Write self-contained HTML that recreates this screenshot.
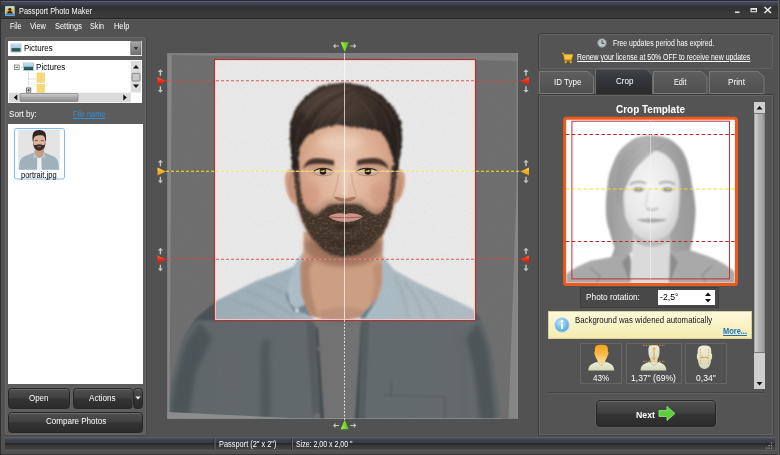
<!DOCTYPE html>
<html><head><meta charset="utf-8"><title>Passport Photo Maker</title>
<style>
html,body{margin:0;padding:0;}
body{width:780px;height:455px;overflow:hidden;background:#525252;font-family:"Liberation Sans","DejaVu Sans",sans-serif;font-size:9px;color:#fff;position:relative;}
.a{position:absolute;box-sizing:border-box;}
.t{position:absolute;white-space:nowrap;line-height:1;transform-origin:0 50%;}
#titlebar{left:0;top:0;width:780px;height:20.4px;background:linear-gradient(#2c2c30 0,#2c2c30 0.7px,#5a5c68 1px,#5a5c68 1.5px,#45475b 2px,#3d3f4e 5.3px,#313131 5.8px,#333 10px,#3a3a3a 13px,#3a3a3a 17.6px,#242424 18.2px,#242424 19.2px,#5a5a5a 19.5px,#5a5a5a 20.4px);}
#menubar{left:0;top:20px;width:780px;height:14px;background:#525252;}
#frameL{left:0;top:0;width:1.3px;height:455px;background:#303030;}
#frameR{left:777.8px;top:0;width:2.2px;height:455px;background:#3e3e3e;border-left:0.6px solid #5c5c5c;}
#leftpanel{left:5px;top:37px;width:141px;height:398px;background:#5c5c5c;border:1px solid #686868;border-radius:2px;box-shadow:1px 0 0 #454545,0 1px 0 #454545;}
#combo{left:8px;top:41px;width:134px;height:14.5px;background:#fff;}
#tree{left:8px;top:60px;width:134px;height:43.2px;background:#fff;}
#filelist{left:8px;top:124.300px;width:134.800px;height:260px;background:#fff;}
.btn{background:linear-gradient(#505050,#404040 45%,#333 55%,#2c2c2c);border:1px solid #262626;border-radius:3.5px;box-shadow:inset 0 1px 0 #6a6a6a,0 0 0 0.5px #666;text-align:center;color:#fff;}
#status{left:5px;top:437px;width:770px;height:13.5px;background:linear-gradient(#5c5c5c 0,#5c5c5c 0.8px,#4a4d5c 1.4px,#3d3f4c 3.5px,#3a3c47 5.6px,#262628 6.2px,#2a2a2a 7px,#3a3a3a 9px,#444 12.4px,#5a5a5a 12.8px);}
#bottom{left:0;top:453.5px;width:780px;height:1.5px;background:#383838;}
#rightpanel{left:539px;top:95px;width:234px;height:340px;background:#545454;border:1px solid #646464;box-shadow:-1px 0 0 #3c3c3c,0 -1px 0 #3c3c3c,1px 0 0 #444,0 1px 0 #444;}
#infobox{left:539px;top:34px;width:234px;height:35px;background:#545454;border:1px solid #626262;border-radius:2px;box-shadow:-1px 0 0 #3e3e3e,0 -1px 0 #3e3e3e;}
</style></head><body>
<div class="a" id="titlebar"></div>
<div class="a" id="menubar"></div>

<svg class="a" style="left:4px;top:5px;" width="12" height="12" viewBox="0 0 12 12"><defs><linearGradient id="ai" x1="0" y1="0" x2="0" y2="1"><stop offset="0" stop-color="#f8e070"/><stop offset="0.7" stop-color="#f0a020"/><stop offset="1" stop-color="#e08818"/></linearGradient></defs>
<rect x="1" y="1" width="9.700" height="9.900" rx="1" fill="#9fd2f0"/><rect x="2.300" y="2.200" width="7.100" height="6.400" fill="url(#ai)"/><rect x="1.500" y="8.800" width="8.700" height="1.700" fill="#2f7fd0"/>
<circle cx="5.850" cy="4.300" r="1.500" fill="#3a2410"/><path d="M3.300,8.600 C3.300,6.300 4.500,5.900 5.850,5.900 C7.200,5.900 8.400,6.300 8.400,8.600 Z" fill="#3a2410"/></svg>
<svg class="a" style="left:730px;top:4px;" width="46" height="12" viewBox="730 4 46 12"><path d="M735,11.500 H739.500 V13 H735 Z" fill="#e8e8e8"/><path d="M750.500,8 H757 V12.300 H750.500 Z M751.600,9.800 H755.900 V11.300 H751.600 Z" fill="#e8e8e8" fill-rule="evenodd"/><path d="M764.500,7 L771,13 M771,7 L764.500,13" stroke="#f0f0f0" stroke-width="1.500"/></svg>
<div class="a" id="leftpanel"></div>
<div class="a" id="combo"></div>
<div class="a" id="tree"></div>
<svg class="a" style="left:5px;top:38px;" width="141" height="68" viewBox="5 38 141 68">
<defs><linearGradient id="pic" x1="0" y1="0" x2="0" y2="1"><stop offset="0" stop-color="#cfe6f6"/><stop offset="0.45" stop-color="#9fc8e4"/><stop offset="0.55" stop-color="#2e6a5c"/><stop offset="1" stop-color="#1f4a4a"/></linearGradient>
<linearGradient id="cbb" x1="0" y1="0" x2="0" y2="1"><stop offset="0" stop-color="#a8a8a8"/><stop offset="1" stop-color="#6e6e6e"/></linearGradient>
<linearGradient id="sth" x1="0" y1="0" x2="0" y2="1"><stop offset="0" stop-color="#d0d0d0"/><stop offset="0.5" stop-color="#a8a8a8"/><stop offset="1" stop-color="#8c8c8c"/></linearGradient></defs>
<!-- combo icon -->
<rect x="11" y="44" width="10" height="8" fill="url(#pic)" stroke="#b8c8d4" stroke-width="1"/>
<rect x="130.800" y="41.700" width="10.200" height="13.100" fill="url(#cbb)" stroke="#5a5a5a" stroke-width="0.600"/>
<path d="M133.700,47 H138.300 L136,50 Z" fill="#333"/>
<!-- tree -->
<rect x="14.500" y="65" width="4.600" height="4.600" fill="#fff" stroke="#777" stroke-width="0.800"/>
<path d="M15.500,67.300 H18.100" stroke="#222" stroke-width="0.800"/>
<path d="M19.200,67.300 H23" stroke="#999" stroke-width="0.700" stroke-dasharray="0.800 0.800"/>
<rect x="23.500" y="63" width="10" height="7.500" fill="url(#pic)" stroke="#b8c8d4" stroke-width="1"/>
<path d="M28.500,71.500 V92 M28.500,79 H36" stroke="#aaa" stroke-width="0.700" stroke-dasharray="0.800 0.800" fill="none"/>
<rect x="37" y="73" width="7.600" height="9.500" fill="#f8d978" stroke="#eec860" stroke-width="0.500"/>
<rect x="37" y="84.400" width="7.600" height="8" fill="#f8d978" stroke="#eec860" stroke-width="0.500"/>
<rect x="26.500" y="88" width="4.300" height="4.300" fill="#fff" stroke="#555" stroke-width="0.800"/>
<path d="M27.300,90.200 H30 M28.650,88.800 V91.600" stroke="#222" stroke-width="0.800"/>
<!-- v scrollbar -->
<rect x="130.800" y="61" width="10.200" height="31.500" fill="#dcdcdc"/>
<path d="M133,68.500 L136,65 L139,68.500 Z M133,84.500 L136,88 L139,84.500 Z" fill="#111"/>
<rect x="132" y="73.400" width="8" height="7.600" rx="1" fill="#c8c8c8" stroke="#777" stroke-width="0.800"/>
<!-- h scrollbar -->
<rect x="9" y="92.700" width="121.800" height="9.600" fill="#dadada"/>
<rect x="20" y="93.500" width="58" height="8" rx="1" fill="url(#sth)" stroke="#808080" stroke-width="0.700"/>
<path d="M17.300,94.500 L13.800,97.500 L17.300,100.500 Z M123.300,94.500 L126.800,97.500 L123.300,100.500 Z" fill="#111"/>
</svg>
<div class="a" id="filelist"></div>
<svg class="a" style="left:12px;top:126px;" width="56" height="56" viewBox="12 126 56 56">
<defs><clipPath id="thc"><rect x="18.200" y="129.900" width="41.600" height="39.800"/></clipPath>
<filter id="thb" x="-10%" y="-10%" width="120%" height="120%"><feGaussianBlur stdDeviation="0.45"/></filter></defs>
<rect x="14.500" y="128.500" width="50" height="50.500" rx="2" fill="#fbfdff" stroke="#7fbcec" stroke-width="1"/>
<rect x="18.200" y="129.900" width="41.600" height="39.800" fill="#e4e4e4"/>
<g clip-path="url(#thc)"><g filter="url(#thb)">
<path d="M19,170 L19.600,163 C20.500,158 23,156.500 28,155 L34,152.600 L39.300,157 L44.600,152.600 L50,155 C55,156.500 57.500,158 58.400,163 L59,170 Z" fill="#9fb1bb"/>
<path d="M37.300,157 L39.300,158 L41.400,157 L41.700,170 L37,170 Z" fill="#f0f0f0"/>
<path d="M34.800,148 L34.500,153 L37.300,157 L39.300,158.200 L41.400,157 L44.200,153 L44,148 Z" fill="#c89c84"/>
<path d="M34.300,152.800 L33,157.500 L36.500,158 L37.300,157 Z M44.400,152.800 L45.800,157.500 L42.300,158 L41.400,157 Z" fill="#b7c7d0"/>
<path d="M33,140 C33,133 45.600,133 45.600,140 L45.400,144 C45,148 43,150.600 39.300,150.800 C35.600,150.600 33.600,148 33.200,144 Z" fill="#dcb39c"/>
<path d="M33,141.500 C33.300,147 34.500,150 39.300,150.800 C44.100,150 45.300,147 45.600,141.500 L44.800,144.500 C43.500,146 42,144.300 39.300,144.300 C36.600,144.300 35.100,146 33.800,144.500 Z" fill="#3a2d27"/>
<path d="M37.600,146.300 H41 V147.200 H37.600 Z" fill="#b98078"/>
<path d="M32.800,141.500 C32,136 32.500,132 36,130.600 C38.500,129.800 41,129.900 43,130.800 C46,132.300 46.600,136 45.800,141.500 L45.200,141.500 C45.300,138 44.500,136.500 43,135.600 C40,135 37,135.300 35,136.500 C33.800,137.500 33.500,139 33.500,141.500 Z" fill="#2f2621"/>
<path d="M35,140.600 H37.800 M40.800,140.600 H43.600" stroke="#3a2c25" stroke-width="0.700"/>
</g></g>
</svg>
<div class="a btn" style="left:8px;top:387.500px;width:61.500px;height:21px;"></div>
<div class="a btn" style="left:72.500px;top:387.500px;width:60px;height:21px;"></div>
<div class="a btn" style="left:133.300px;top:387.500px;width:9.500px;height:21px;"></div>
<svg class="a" style="left:134px;top:394px;" width="8" height="8" viewBox="0 0 8 8"><path d="M1.500,2.500 H6.500 L4,5.500 Z" fill="#fff"/></svg>
<div class="a btn" style="left:8px;top:411.500px;width:134.800px;height:21px;"></div>

<svg class="a" id="photo" style="left:150px;top:34px;" width="385" height="402" viewBox="150 34 385 402">
<defs>
<clipPath id="cv"><rect x="167.5" y="53" width="350.5" height="365.5"/></clipPath>
<filter id="b05" x="-10%" y="-10%" width="120%" height="120%"><feGaussianBlur stdDeviation="0.5"/></filter>
<filter id="b1" x="-10%" y="-10%" width="120%" height="120%"><feGaussianBlur stdDeviation="0.9"/></filter>
<filter id="b2" x="-20%" y="-20%" width="140%" height="140%"><feGaussianBlur stdDeviation="2"/></filter>
<filter id="b3" x="-30%" y="-30%" width="160%" height="160%"><feGaussianBlur stdDeviation="4"/></filter>
<filter id="rag" x="-10%" y="-10%" width="120%" height="120%"><feTurbulence type="fractalNoise" baseFrequency="0.35" numOctaves="2" seed="4" result="n"/><feDisplacementMap in="SourceGraphic" in2="n" scale="3" xChannelSelector="R" yChannelSelector="G" result="d"/><feGaussianBlur in="d" stdDeviation="0.8"/></filter>
<filter id="rag2" x="-10%" y="-10%" width="120%" height="120%"><feTurbulence type="fractalNoise" baseFrequency="0.5" numOctaves="2" seed="9" result="n"/><feDisplacementMap in="SourceGraphic" in2="n" scale="3" xChannelSelector="R" yChannelSelector="G" result="d"/><feGaussianBlur in="d" stdDeviation="0.9"/></filter>
<filter id="grain" x="0" y="0" width="100%" height="100%"><feTurbulence type="fractalNoise" baseFrequency="0.9" numOctaves="2" seed="3" result="n"/><feColorMatrix in="n" type="matrix" values="0 0 0 0 0  0 0 0 0 0  0 0 0 0 0  0.9 0 0 0 -0.35"/><feComposite in2="SourceGraphic" operator="in"/></filter>
<filter id="bgr" x="0" y="0" width="100%" height="100%"><feTurbulence type="fractalNoise" baseFrequency="0.4" numOctaves="2" seed="11" result="n"/><feColorMatrix in="n" type="matrix" values="0 0 0 0 0  0 0 0 0 0  0 0 0 0 0  2.2 0 0 0 -0.95" result="m"/><feComposite in="SourceGraphic" in2="m" operator="in" result="c"/><feGaussianBlur in="c" stdDeviation="0.5"/></filter>
<linearGradient id="shirtg" x1="0" y1="0" x2="1" y2="0">
<stop offset="0" stop-color="#98a9b2"/><stop offset="0.35" stop-color="#a3b3bb"/><stop offset="0.65" stop-color="#acbac1"/><stop offset="1" stop-color="#b1bdc3"/></linearGradient>
<radialGradient id="faceg" cx="0.5" cy="0.38" r="0.62">
<stop offset="0" stop-color="#eccab3"/><stop offset="0.55" stop-color="#ddae93"/><stop offset="1" stop-color="#c08b70"/></radialGradient>
<radialGradient id="hairg" cx="0.45" cy="0.25" r="0.6">
<stop offset="0" stop-color="#51443b"/><stop offset="0.6" stop-color="#352b26"/><stop offset="1" stop-color="#27201c"/></radialGradient>
</defs>
<g clip-path="url(#cv)">
<rect x="167" y="52" width="352" height="367" fill="#e9e9e9"/>
<!-- shirt -->
<g filter="url(#b1)">
<path id="shp" d="M303,252 L293,267 L255,281.500 L217,300.600 L196,318 L181,342 L172,380 L167,420 L501,420 L499,400 L492,349 L483,323 L473,309 L452,298.800 L417.700,283 L393.500,269.400 L382,255 L372,300 L345,325 L318,300 Z" fill="url(#shirtg)"/>
<!-- lighten lower part (appears lighter under dim) -->
<path d="M196,320.500 L181,342 L172,380 L167,420 L501,420 L499,400 L492,349 L483,323 L481,320.500 Z" fill="#e8f8fc" opacity="0.6"/>
<!-- sleeve/fold shading -->
<path d="M200,322 L185,345 L175,382 L170,420 L188,420 L196,372 L212,338 Z" fill="#7e919c" opacity="0.55" filter="url(#b2)"/>
<path d="M478,322 L488,349 L496,420 L480,420 L474,372 L466,338 Z" fill="#7c8f9a" opacity="0.55" filter="url(#b2)"/>
<path d="M214,330 C226,360 224,390 228,420 L236,420 C233,390 236,360 222,328 Z" fill="#d0dbe0" opacity="0.45" filter="url(#b2)"/>
<path d="M262,340 C258,370 262,395 260,420 L270,420 C272,395 268,370 270,340 Z" fill="#7f929d" opacity="0.45" filter="url(#b2)"/>
<path d="M455,330 C462,360 458,390 460,420 L468,420 C468,390 470,360 462,330 Z" fill="#c4d0d6" opacity="0.4" filter="url(#b2)"/>
<g stroke="#8799a3" stroke-width="1.400" fill="none" opacity="0.55" filter="url(#b1)">
<path d="M246,290 C262,296 280,306 296,318"/><path d="M232,300 C250,304 266,312 280,322"/><path d="M262,284 C276,288 290,296 300,306"/>
<path d="M404,282 C414,292 420,304 424,320"/><path d="M420,290 C430,300 436,310 440,322"/><path d="M394,276 C402,288 406,300 408,318"/>
</g>
<!-- tshirt -->
<path d="M311,314 L322,319.500 L345,321 L362,315 L360,330 L355,420 L317,420 L318,330 Z" fill="#f0f0f0"/>
<!-- neck -->
<path d="M303.600,232 L303.600,252.700 L299.800,268 L300.800,293 L304.600,304.600 L311,316 L322,319.500 L345,320.500 L359.400,318 L366,310 L377.700,298.800 L382.500,283.500 L382.500,256.500 L383,232 Z" fill="#cda084"/>
<path d="M300,262 L300.800,293 L304.600,304.600 L311,316 L318,318 L311,292 L309,270 L316,256 Z" fill="#a67a63" opacity="0.6" filter="url(#b1)"/>
<path d="M382.500,262 L382.500,283.500 L377.700,298.800 L370,306 L374,284 L373,266 Z" fill="#b08269" opacity="0.45" filter="url(#b1)"/>
<path d="M305,250 C318,272 372,272 382,250 L382,240 L305,240 Z" fill="#8a5f4b" opacity="0.6" filter="url(#b2)"/>
<path d="M318,312 C330,306 355,306 366,311 L359,318 L345,320.500 L322,319.500 Z" fill="#b68c76" opacity="0.6" filter="url(#b1)"/>
<!-- collar -->
<path d="M303.600,252.700 L296,262 L287,290 L290,303 L296,309 L304.600,304.600 L300.800,293 L299.800,268 Z" fill="#adbec8"/>
<path d="M287,290 L290,303 L296,309 L304.600,304.600 L311,316 L303,313 L294,312 L286,298 Z" fill="#64788a" opacity="0.75"/>
<path d="M382.500,256.500 L390,266 L399,296 L392,316 L386,320 L359.400,318 L366,310 L377.700,298.800 L382.500,283.500 Z" fill="#abbcc6"/>
<path d="M359.400,318 L366,310 L377.700,298.800 L373,306 L364,320 Z" fill="#6a7e8c"/>
<ellipse cx="297" cy="310.400" rx="2" ry="1.300" fill="#f6f6f6" transform="rotate(35 297 310.400)"/>
<!-- placket -->
<path d="M306,318 L318,328 L324,420 L313,420 Z" fill="#b4c5cc"/>
<path d="M318,328 L324,420 L321,420 L316,328 Z" fill="#8798a2"/>
<path d="M362,318 L369,320 L365,420 L355,420 Z" fill="#b4c5cc"/>
<path d="M361,325 L362,318 L358,420 L355,420 Z" fill="#8798a2"/>
<circle cx="320.500" cy="349" r="3" fill="#dfe8ec"/>
<circle cx="317" cy="416" r="3" fill="#dfe8ec"/>
<!-- pocket -->
<path d="M384,395 L445,397 L445,420 M391,381 L391,396" stroke="#a9bac2" stroke-width="1.200" fill="none"/>
</g>
<g filter="url(#b1)">
<!-- ears -->
<path d="M295,169.500 C288,167 284,173 285,182 C286,193 290,203 296,205 Z" fill="#d39f84"/>
<path d="M395,169.500 C402,167 406,173 405,182 C404,193 400,202 394,204 Z" fill="#d39f84"/>
<path d="M292,175 C289,178 289,190 293,198" stroke="#b07f68" stroke-width="1.500" fill="none"/>
<path d="M398,175 C401,178 401,190 397,197" stroke="#b07f68" stroke-width="1.500" fill="none"/>
<!-- face -->
<path d="M293,150 C293,105 397,105 397,150 L396,183 L393.800,201.500 L390.300,217.700 L383.400,233.800 L371.900,247.600 L358,255.700 L344,258 L335,256.900 L321,250 L309.600,236 L302.700,222 L297,203.800 L294.600,183 Z" fill="url(#faceg)"/>
<!-- eye socket shading -->
<ellipse cx="321" cy="168" rx="14" ry="6" fill="#b98a72" opacity="0.55" filter="url(#b2)"/>
<ellipse cx="369" cy="168" rx="14" ry="6" fill="#b98a72" opacity="0.55" filter="url(#b2)"/>
<!-- cheeks shading -->
<ellipse cx="311" cy="194" rx="9" ry="12" fill="#d0937c" opacity="0.5" filter="url(#b2)"/>
<ellipse cx="379" cy="194" rx="9" ry="12" fill="#d0937c" opacity="0.5" filter="url(#b2)"/>
<path d="M294,165 L296,200 L303,222 L300,190 L299,165 Z" fill="#a87a64" opacity="0.5" filter="url(#b2)"/>
<path d="M397,165 L394,200 L388,222 L391,190 L392,165 Z" fill="#a87a64" opacity="0.55" filter="url(#b2)"/>
<!-- forehead highlight -->
<ellipse cx="340" cy="142" rx="22" ry="9" fill="#f3dccb" opacity="0.6" filter="url(#b3)"/>
<!-- nose highlight -->
<path d="M343,170 L342,196 L347,196 L347,170 Z" fill="#f0d5c3" opacity="0.6" filter="url(#b1)"/>
</g>
<!-- stubble halo -->
<path d="M294,172 L295.700,190 C297,198 300,204 306,206.500 C310,208 314,209 317,208 L324,202 L330,199.500 L344,198.500 L360,199.500 L366,203 C370,207 374,209 378,208.500 C382,208 386,206 388,203 C391,199 392.500,194 393,188 L396,172 L393.800,205 L388,225 L375,246 L358,256.500 L344,259 L331,256.900 L318,249 L307,234 L300,218 L296,200 Z" fill="#5a463b" opacity="0.25" filter="url(#b2)"/>
<!-- beard -->
<g filter="url(#rag2)">
<path d="M292.500,166 L298.500,166 L300,186 C301,197 303,206 307.500,209.700 C310,212.500 313,214.500 316.500,214.500 C320,213 322,210 324.600,208 L330,204.500 L344,203.400 L360,204.500 L367,209.400 C370,212 373,214 376.500,214.500 C380,214 382,212 384.200,209.600 C387.500,206 389,198 390.300,188 L392,166 L397.500,166 L395.500,185 L393.300,201.500 L389.800,217.700 L382.900,233.300 L371.500,247 L358,255 L344,257.300 L335,256.200 L321.500,249.500 L310.100,235.500 L303.200,222 L297.500,203.800 L295.100,185 Z" fill="#43342a"/>
</g>
<path d="M292.500,166 L298.500,166 L300,186 C301,197 303,206 307.500,209.700 C310,212.500 313,214.500 316.500,214.500 C320,213 322,210 324.600,208 L330,204.500 L344,203.400 L360,204.500 L367,209.400 C370,212 373,214 376.500,214.500 C380,214 382,212 384.200,209.600 C387.500,206 389,198 390.300,188 L392,166 L397.500,166 L395.500,185 L393.300,201.500 L389.800,217.700 L382.900,233.300 L371.500,247 L358,255 L344,257.300 L335,256.200 L321.500,249.500 L310.100,235.500 L303.200,222 L297.500,203.800 L295.100,185 Z" fill="#b89078" opacity="0.3" filter="url(#bgr)"/>
<path d="M322,232 C330,246 358,246 368,232 C360,250 330,250 322,232 Z" fill="#2a1f18" opacity="0.6" filter="url(#b2)"/>
<path d="M334,226 C340,223 350,223 356,226 C352,231 338,231 334,226 Z" fill="#2a1f18" opacity="0.55" filter="url(#b1)"/>
<g filter="url(#b05)">
<!-- mouth -->
<path d="M328.500,216.500 C335,212.300 342,213 345.500,214.200 C349,213 356,212.300 363,216.500 C356,223.500 336,223.500 328.500,216.500 Z" fill="#cf938a"/>
<path d="M329.500,216.800 C338,218 353,218 362.500,216.800" stroke="#95594f" stroke-width="0.900" fill="none"/>
</g>
<!-- hair -->
<g filter="url(#rag)">
<path d="M292.500,169 L291.500,157.600 L289.800,139 L290,123 L295.400,109.500 L305.500,96 L321,85.500 L344,82.500 L367,86 L382.500,96 L394.500,109.500 L401.200,123 L402.200,139 L400,157.600 L397.500,171.500 L395,171.500 L393.800,162 L390,148.400 L386.500,139 L379,131 L366,128.500 L352,127 L340,125 L328,126 L316.500,130 L306,137 L299.500,148 L298.500,169 Z" fill="url(#hairg)"/>
</g>
<path d="M300,110 C312,92 336,86 352,88 C338,92 318,100 308,118 Z" fill="#5a4c42" opacity="0.5" filter="url(#b2)"/>
<g stroke="#6a5a4f" stroke-width="1.700" fill="none" opacity="0.32" filter="url(#b1)">
<path d="M352,88 C335,90 315,100 303,122"/><path d="M356,92 C338,96 322,106 312,128"/><path d="M350,98 C336,102 324,112 318,128"/>
<path d="M346,86 C328,88 306,98 296,116"/><path d="M358,96 C350,104 342,114 338,124"/><path d="M362,90 C376,94 390,106 396,124"/>
<path d="M366,96 C378,102 388,114 390,134"/><path d="M360,100 C368,108 374,116 376,126"/><path d="M300,126 C296,136 295,146 296,158"/><path d="M396,128 C399,138 399,150 397,160"/>
</g>
<g stroke="#1c1512" stroke-width="1.600" fill="none" opacity="0.3" filter="url(#b1)">
<path d="M348,92 C334,96 318,108 308,126"/><path d="M354,100 C346,108 336,116 330,126"/><path d="M364,94 C378,100 388,112 392,130"/><path d="M356,88 C368,88 384,96 394,112"/>
</g>
<g filter="url(#b05)">
<!-- brows -->
<path d="M303.500,167 C305.500,162.500 309,159.300 313,158.500 C320,157.500 328,158.800 334,160.500 L334,165.500 C327,164 319,163.800 313,164.300 C309,164.800 306,166 303.500,168.500 Z" fill="#46352b" filter="url(#b1)"/>
<path d="M388.500,167.500 C386.500,162.500 382,159 377,158.200 C370,157.500 362,158.800 357,160.500 L357,165.500 C363,164 371,163.800 377,164.300 C381,164.800 385,166 388.500,169 Z" fill="#46352b" filter="url(#b1)"/>
<!-- eyes -->
<path d="M313.600,172 C318,167.800 328,167.800 333,172 C328,175.500 318,175.500 313.600,172 Z" fill="#c9b0a2"/>
<circle cx="323" cy="171.400" r="3.300" fill="#2c1a10"/>
<circle cx="324" cy="170.500" r="0.700" fill="#d8c8b8"/>
<path d="M313,172 C318,167 328,167 333.500,172" stroke="#2e1e17" stroke-width="1.200" fill="none"/>
<path d="M315,174 C319,176.300 328,176.300 332,174" stroke="#a0735e" stroke-width="0.700" fill="none"/>
<path d="M356.400,172 C361,167.800 373,167.800 378,172 C373,175.500 361,175.500 356.400,172 Z" fill="#c9b0a2"/>
<circle cx="367.900" cy="171.400" r="3.300" fill="#2c1a10"/>
<circle cx="368.900" cy="170.500" r="0.700" fill="#d8c8b8"/>
<path d="M356,172 C361,167 373,167 378.600,172" stroke="#2e1e17" stroke-width="1.200" fill="none"/>
<path d="M358,174 C362,176.300 372,176.300 376.500,174" stroke="#a0735e" stroke-width="0.700" fill="none"/>
<!-- nose -->
<path d="M334,197.500 C337,201.500 342,201 345,202 C348,201 353,201.500 356,197.500 C354,195.500 350,198.500 345,198.500 C340,198.500 336,195.500 334,197.500 Z" fill="#a26a55" opacity="0.85"/>
<path d="M338.500,174 C338,184 334.500,192 333.200,197" stroke="#c08f77" stroke-width="1.800" fill="none" opacity="0.35"/>
<path d="M351.500,174 C352,184 355.500,192 356.800,197" stroke="#c08f77" stroke-width="1.800" fill="none" opacity="0.35"/>
</g>
<!-- photo grain -->
<rect x="167" y="52" width="352" height="367" fill="#000" opacity="0.07" filter="url(#grain)"/>
</g>
<!-- dim overlay -->
<path fill-rule="evenodd" fill="#000" fill-opacity="0.52" d="M167.5,53 H518 V418.500 H167.5 Z M215,60 H475 V320 H215 Z"/>
<!-- wedges -->
<path d="M167.500,53 H171.800 L169.500,418.500 H167.500 Z" fill="#868686"/>
<path d="M167.500,53 H518 V61 L167.500,55 Z" fill="#7f7f7f"/>
<path d="M518,150 V418.500 H508.500 Z" fill="#858585"/>
<rect x="516.500" y="53" width="1.500" height="365.500" fill="#8a8a8a" opacity="0.7"/>
<path d="M167.500,412 L303,418.500 H167.500 Z" fill="#8c8c8c"/>
<!-- crop rect -->
<rect x="215.500" y="60.500" width="259" height="259" fill="none" stroke="#ffd0d0" stroke-opacity="0.85" stroke-width="1"/>
<rect x="214.500" y="59.500" width="261" height="261" fill="none" stroke="#a83636" stroke-width="1.1"/>
<!-- lines -->
<g stroke-width="1.100">
<path d="M215,80.800 H475 M215,259.300 H475" stroke="#fff" stroke-opacity="0.3"/>
<path d="M166,171.300 H215 M475,171.300 H521" stroke="#7d7420" stroke-opacity="0.85"/>
<path d="M215,171.300 H475" stroke="#fff" stroke-opacity="0.4"/>
<path d="M166,80.800 H521 M166,259.300 H521" stroke="#dc4545" stroke-dasharray="3 2" stroke-opacity="0.9"/>
<path d="M166,171.300 H521" stroke="#efe650" stroke-dasharray="3 2"/>
</g>
<line x1="344.500" y1="53" x2="344.500" y2="320" stroke="#fff" stroke-width="1" opacity="0.68"/>
<line x1="344.500" y1="320" x2="344.500" y2="420" stroke="#fff" stroke-width="1" stroke-dasharray="2 1.500" opacity="0.75"/>
<defs><linearGradient id="mr" x1="0" y1="0" x2="0" y2="1"><stop offset="0" stop-color="#ff6a30"/><stop offset="0.5" stop-color="#f02a10"/><stop offset="1" stop-color="#d81808"/></linearGradient>
<linearGradient id="my" x1="0" y1="0" x2="0" y2="1"><stop offset="0" stop-color="#ffd860"/><stop offset="0.5" stop-color="#f8b020"/><stop offset="1" stop-color="#e89810"/></linearGradient>
<linearGradient id="mg" x1="0" y1="0" x2="1" y2="0"><stop offset="0" stop-color="#b8f060"/><stop offset="0.5" stop-color="#78d828"/><stop offset="1" stop-color="#58b818"/></linearGradient></defs>
<path d="M157.500,77 L166,81 L157.500,85 Z" fill="url(#mr)"/>
<path d="M529,77 L520.500,81 L529,85 Z" fill="url(#mr)"/>
<path d="M157.500,167.5 L166,171.5 L157.500,175.5 Z" fill="url(#my)"/>
<path d="M529,167.5 L520.500,171.5 L529,175.5 Z" fill="url(#my)"/>
<path d="M157.500,255.5 L166,259.5 L157.500,263.5 Z" fill="url(#mr)"/>
<path d="M529,255.5 L520.500,259.5 L529,263.5 Z" fill="url(#mr)"/>
<path d="M340.700,42.300 H348.700 L344.700,52 Z" fill="url(#mg)"/>
<path d="M340.700,429.300 H348.700 L344.700,419.800 Z" fill="url(#mg)"/>
<path d="M159.70000000000002,75.7 V72.1 H157.8 L160.4,69.3 L163.0,72.1 H161.1 V75.7 Z M159.70000000000002,86.3 V89.9 H157.8 L160.4,92.7 L163.0,89.9 H161.1 V86.3 Z M525.3,75.7 V72.1 H523.4 L526,69.3 L528.6,72.1 H526.7 V75.7 Z M525.3,86.3 V89.9 H523.4 L526,92.7 L528.6,89.9 H526.7 V86.3 Z M159.70000000000002,166.2 V162.60000000000002 H157.8 L160.4,159.8 L163.0,162.60000000000002 H161.1 V166.2 Z M159.70000000000002,176.8 V180.39999999999998 H157.8 L160.4,183.2 L163.0,180.39999999999998 H161.1 V176.8 Z M525.3,166.2 V162.60000000000002 H523.4 L526,159.8 L528.6,162.60000000000002 H526.7 V166.2 Z M525.3,176.8 V180.39999999999998 H523.4 L526,183.2 L528.6,180.39999999999998 H526.7 V176.8 Z M159.70000000000002,254.2 V250.60000000000002 H157.8 L160.4,247.8 L163.0,250.60000000000002 H161.1 V254.2 Z M159.70000000000002,264.8 V268.4 H157.8 L160.4,271.2 L163.0,268.4 H161.1 V264.8 Z M525.3,254.2 V250.60000000000002 H523.4 L526,247.8 L528.6,250.60000000000002 H526.7 V254.2 Z M525.3,264.8 V268.4 H523.4 L526,271.2 L528.6,268.4 H526.7 V264.8 Z M339,45.4 H335.5 V43.4 L333,46 L335.5,48.6 V46.6 H339 Z M350.3,45.4 H353.8 V43.4 L356.3,46 L353.8,48.6 V46.6 H350.3 Z M339,424.9 H335.5 V422.9 L333,425.5 L335.5,428.1 V426.1 H339 Z M350.3,424.9 H353.8 V422.9 L356.3,425.5 L353.8,428.1 V426.1 H350.3 Z" fill="#c4c4c4"/>
</svg>

<div class="a" id="infobox"></div>
<svg class="a" style="left:596.400px;top:37px;" width="12" height="12" viewBox="0 0 12 12"><circle cx="6" cy="6" r="4.200" fill="#bcc4c6" stroke="#8e9698" stroke-width="0.800"/><path d="M6,3.200 V6.300 H8.200" stroke="#3a3a3a" stroke-width="1" fill="none"/></svg>
<svg class="a" style="left:561px;top:52px;" width="13" height="12" viewBox="0 0 13 12"><path d="M1,1.300 H2.600 L4,7.800 H10.500" stroke="#f0a818" stroke-width="1.200" fill="none"/><path d="M3,2.600 H11.700 L10.500,7.300 H4 Z" fill="#f8c544" stroke="#f0a818" stroke-width="0.600"/><circle cx="4.800" cy="10" r="1.200" fill="#f0a010"/><circle cx="9.700" cy="10" r="1.200" fill="#f0a010"/></svg>
<!-- tabs -->
<svg class="a" style="left:535px;top:66px;" width="240" height="32" viewBox="535 66 240 32">
<defs><linearGradient id="tabi" x1="0" y1="0" x2="0" y2="1"><stop offset="0" stop-color="#5e5e5e"/><stop offset="1" stop-color="#505050"/></linearGradient>
<linearGradient id="taba" x1="0" y1="0" x2="0" y2="1"><stop offset="0" stop-color="#42434b"/><stop offset="0.45" stop-color="#34353a"/><stop offset="1" stop-color="#2a2a2a"/></linearGradient></defs>
<path d="M539.500,93.500 V71.500 H588 L593.500,77 V93.500 Z" fill="url(#tabi)" stroke="#777" stroke-width="1"/>
<path d="M653.500,93.500 V71.500 H701.500 L707,77 V93.500 Z" fill="url(#tabi)" stroke="#777" stroke-width="1"/>
<path d="M709.500,93.500 V71.500 H758.500 L764,77 V93.500 Z" fill="url(#tabi)" stroke="#777" stroke-width="1"/>
<path d="M595.500,94.500 V69 H646.500 L652.500,75 V94.500 Z" fill="url(#taba)" stroke="#6a6a6a" stroke-width="1"/>
</svg>
<div class="a" id="rightpanel"></div>
<!-- crop template -->
<svg class="a" id="tmpl" style="left:560px;top:113px;" width="182" height="174" viewBox="560 113 182 174">
<defs>
<clipPath id="tc"><rect x="566.200" y="119.800" width="168.700" height="163"/></clipPath>
<filter id="tb1" x="-10%" y="-10%" width="120%" height="120%"><feGaussianBlur stdDeviation="0.8"/></filter>
<filter id="tb2" x="-20%" y="-20%" width="140%" height="140%"><feGaussianBlur stdDeviation="1.8"/></filter>
<linearGradient id="hg" x1="0" y1="0" x2="1" y2="0"><stop offset="0" stop-color="#9c9c9c"/><stop offset="0.4" stop-color="#b4b4b4"/><stop offset="0.6" stop-color="#a8a8a8"/><stop offset="1" stop-color="#989898"/></linearGradient>
<radialGradient id="fg" cx="0.45" cy="0.4" r="0.6"><stop offset="0" stop-color="#f5f5f5"/><stop offset="0.7" stop-color="#e8e8e8"/><stop offset="1" stop-color="#d4d4d4"/></radialGradient>
</defs>
<rect x="564.650" y="118.250" width="171.800" height="166.200" rx="2" fill="#fff" stroke="#f0591a" stroke-width="3.100"/>
<g clip-path="url(#tc)">
<g filter="url(#tb1)">
<!-- hair back -->
<path d="M651.600,135.500 C640,135.500 634,138 628.700,142.600 C621,148 617,154 614.600,160 C610,170 608,178 607.600,185 C606,195 605.800,203 605.800,209.500 C606,218 607,225 609.400,230.600 C611,238 613,243 614.600,248 L611,258 L625,256 L640,248 L664,248 L678,256 L688.600,258.800 L690.400,248 C692,243 693,237 693.900,230.600 C695,222 695.600,215 695.600,209.500 C695,200 694,192 692,185 C691,176 689,168 686.800,160 C684,152 680,147 674.500,142.600 C668,137.500 660,135.500 651.600,135.500 Z" fill="url(#hg)"/>
<!-- jacket -->
<path d="M566,284 L566,274 C572,269 580,265.500 590,261 L611,257 L630,254 L630,284 Z" fill="#a9a9a9"/>
<path d="M735,284 L735,272 C728,266 720,261 710,257 L690,250 L670,252 L669,284 Z" fill="#a9a9a9"/>
<path d="M630,254 L622,262 L630,284 L634,284 Z" fill="#8c8c8c"/>
<path d="M670,252 L678,262 L669,284 L665,284 Z" fill="#8c8c8c"/>
<path d="M590,268 L600,276 L596,284 M712,266 L702,275 L706,284" stroke="#8a8a8a" stroke-width="1.200" fill="none"/>
<!-- neck -->
<path d="M634,226 L632,250 L630,284 L669,284 L670,250 L670,226 Z" fill="#dadada"/>
<path d="M634,240 C642,249 662,249 670,240 L670,232 L634,232 Z" fill="#bcbcbc"/>
<!-- face -->
<path d="M623.500,188 C623,170 630,152 652,150 C672,152 680,170 679.800,190 C679.800,200 679,210 678,216.500 C676,224 673,230 669,234 C662,239 657,241 651.600,241 C646,241 641,239 635.800,234 C630,228 627,222 625,216.500 C624,208 623.500,198 623.500,188 Z" fill="url(#fg)"/>
<!-- fringe -->
<path d="M666,143 C658,148 650,152 643,160 C635,168 628,180 623.500,194 L618,208 C615,190 616,172 620,160 C626,146 640,138 652,137.500 C668,138 680,148 686,162 C689,175 689,192 686,206 L683.500,192 C682,182 680.500,174 678,167 C675,158 671,150 666,143 Z" fill="url(#hg)"/>
<path d="M666,143 C657,149 648,155 640,164" stroke="#8c8c8c" stroke-width="1" fill="none" opacity="0.6"/>
<g stroke="#8e8e8e" stroke-width="0.900" fill="none" opacity="0.45">
<path d="M660,140 C645,146 628,160 618,190"/><path d="M655,138 C638,144 622,160 612,195"/><path d="M670,142 C680,152 688,170 690,200"/><path d="M612,200 C610,220 612,240 616,252"/><path d="M692,200 C693,220 692,240 688,254"/>
</g>
</g>
<g filter="url(#tb1)">
<!-- brows / eyes -->
<path d="M630,184.500 C634,181.500 641,181 646,183.500" stroke="#a0a0a0" stroke-width="1.700" fill="none"/>
<path d="M659,183.500 C664,181 671,181.500 675,184.500" stroke="#a0a0a0" stroke-width="1.700" fill="none"/>
<ellipse cx="638.500" cy="189.500" rx="5" ry="2" fill="#909090"/>
<ellipse cx="667.500" cy="189.500" rx="5" ry="2" fill="#8c8c8c"/>
<!-- nose / mouth -->
<path d="M646.500,208 C649,210.500 655,210.500 658,208" stroke="#a8a8a8" stroke-width="1.500" fill="none"/>
<path d="M648,190 C647,198 646,203 645.500,207" stroke="#cfcfcf" stroke-width="1.200" fill="none"/>
<path d="M638,220 C644,223.500 659,223.500 665.500,220 C659,218 644,218 638,220 Z" fill="#b0b0b0"/>
<path d="M637.500,219.500 C644,221 659,221 666,219.500" stroke="#8e8e8e" stroke-width="0.900" fill="none"/>


</g>
</g>
<rect x="571.900" y="121.200" width="157.600" height="157.700" fill="none" stroke="#c03038" stroke-width="1"/>
<line x1="566" y1="134.500" x2="735" y2="134.500" stroke="#b82c2c" stroke-width="1" stroke-dasharray="3.500 2.400"/>
<line x1="566" y1="241.500" x2="735" y2="241.500" stroke="#b82c2c" stroke-width="1" stroke-dasharray="3.500 2.400"/>
<line x1="566" y1="189" x2="735" y2="189" stroke="#f0e020" stroke-width="1" stroke-dasharray="3.500 2.400"/>
<line x1="650.500" y1="121" x2="650.500" y2="279" stroke="#f4f4f4" stroke-width="1" opacity="0.55"/>
</svg>
<!-- rotation -->
<div class="a" style="left:580px;top:287px;width:139px;height:21px;background:#484848;border:1px solid #3e3e3e;"></div>
<div class="a" style="left:658px;top:290px;width:57px;height:15px;background:#fff;"></div>
<svg class="a" style="left:704px;top:291px;" width="8" height="13" viewBox="0 0 8 13"><path d="M1,5 L4,1.500 L7,5 Z M1,8 L4,11.500 L7,8 Z" fill="#111"/></svg>
<!-- yellow bar -->
<div class="a" style="left:548px;top:311px;width:204px;height:28px;background:linear-gradient(#fdf9dc,#f5ecb0);border:1px solid #d8cf9a;"></div>
<svg class="a" style="left:554px;top:317px;" width="16" height="16" viewBox="0 0 16 16"><defs><radialGradient id="ig" cx="0.4" cy="0.3" r="0.8"><stop offset="0" stop-color="#bfe4fa"/><stop offset="1" stop-color="#3f9fe0"/></radialGradient></defs><circle cx="8" cy="8" r="7" fill="url(#ig)" stroke="#8cc8f0" stroke-width="1"/><rect x="7" y="6.500" width="2" height="5.500" fill="#fff"/><circle cx="8" cy="4.300" r="1.200" fill="#fff"/></svg>
<!-- icon boxes -->
<div class="a" style="left:580px;top:343px;width:42px;height:41px;border:1px solid #666;background:#525252;"></div>
<div class="a" style="left:626px;top:343px;width:56px;height:41px;border:1px solid #666;background:#525252;"></div>
<div class="a" style="left:685px;top:343px;width:42px;height:41px;border:1px solid #666;background:#525252;"></div>
<svg class="a" id="icons" style="left:580px;top:343px;" width="147" height="41" viewBox="580 343 147 41">
<defs>
<linearGradient id="oh" x1="0" y1="0" x2="0" y2="1"><stop offset="0" stop-color="#f7a21a"/><stop offset="0.6" stop-color="#f9bc4c"/><stop offset="1" stop-color="#f6dca0"/></linearGradient>
<linearGradient id="cr" x1="0" y1="0" x2="0" y2="1"><stop offset="0" stop-color="#efefdc"/><stop offset="1" stop-color="#d4d6b8"/></linearGradient>
<filter id="ib" x="-10%" y="-10%" width="120%" height="120%"><feGaussianBlur stdDeviation="0.35"/></filter>
</defs>
<g filter="url(#ib)">
<!-- icon1 -->
<path d="M588.300,370.400 C588.500,365 592,363.500 597,362 L601.400,366 L605.800,362 C611,363.500 614,365 614.200,370.400 Z" fill="url(#cr)"/>
<path d="M597.500,358 L597.500,363 L601.400,366 L605.300,363 L605.300,358 Z" fill="#f6d898"/>
<path d="M595,351 C594.300,345.500 597,344.800 601.400,344.800 C606,344.800 608.500,345.500 607.800,351 C608.800,351.800 608.600,355 607.600,355.600 C607,359 605,361.500 601.400,361.600 C597.800,361.500 595.800,359 595.200,355.600 C594.200,355 594,351.800 595,351 Z" fill="url(#oh)"/>
<!-- icon2 -->
<path d="M640.600,370.400 C640.800,365 644,363.500 649.500,362 L654,366 L658.500,362 C663,363.500 666.100,365 666.300,370.400 Z" fill="url(#cr)"/>
<path d="M650.500,357 L650.500,363 L654,366 L657.500,363 L657.500,357 Z" fill="#e2e2c8"/>
<path d="M648.400,351.500 C648,346 650,345 654,345 C658,345 660,346 659.500,351.500 C659.600,356.500 657.500,361 654,361 C650.500,361 648.300,356.500 648.400,351.500 Z" fill="url(#cr)"/>
<!-- icon3 -->
<path d="M697.800,353 C697.200,346.500 700,345.600 704.500,345.600 C709,345.600 711.800,346.500 711.200,353 C712.600,354 712.400,359 711,360 C710.600,365.500 708.500,369 704.500,369 C700.500,369 698.400,365.500 698,360 C696.600,359 696.400,354 697.800,353 Z" fill="url(#cr)"/>
</g>
<g stroke="#ee9a30" stroke-width="0.900" fill="none">
<path d="M643,345.300 H665 M643,361.300 H665" stroke-dasharray="1.500 1.200"/>
<path d="M654,347.500 V359.500 M652.500,349.500 L654,347.500 L655.500,349.500 M652.500,357.500 L654,359.500 L655.500,357.500"/>
<path d="M700.500,349 V365 M708.500,349 V365" stroke-dasharray="1.500 1.200" opacity="0.8"/>
<path d="M701,357.500 H708 M702.200,356.300 L701,357.500 L702.200,358.700 M706.800,356.300 L708,357.500 L706.800,358.700"/>
</g>
</svg>
<!-- scrollbar -->
<div class="a" style="left:754px;top:102px;width:11px;height:287px;background:#cfcfcf;"></div>
<div class="a" style="left:754px;top:113px;width:11px;height:240px;background:linear-gradient(90deg,#8a8a8a,#d4d4d4 15%,#b4b4b4 40%,#a4a4a4 80%,#808080);border-top:1px solid #777;border-bottom:1px solid #777;"></div>
<svg class="a" style="left:754px;top:102px;" width="11" height="287" viewBox="0 0 11 287"><path d="M2.500,7.500 L5.500,4 L8.500,7.500 Z M2.500,280 L5.500,283.500 L8.500,280 Z" fill="#111"/></svg>
<div class="a" style="left:548px;top:392px;width:216px;height:2px;background:#444;border-bottom:1px solid #606060;"></div>
<!-- next -->
<div class="a btn" style="left:596px;top:400px;width:120px;height:27px;border-radius:4px;"></div>
<svg class="a" style="left:658px;top:405px;" width="18" height="17" viewBox="0 0 18 17"><path d="M1,5.500 H9 V1.500 L17,8.500 L9,15.500 V11.500 H1 Z" fill="#5ccf3c" stroke="#9ae87a" stroke-width="0.800"/></svg>

<div class="a" id="status"></div>
<svg class="a" style="left:0;top:437px;" width="780" height="14" viewBox="0 437 780 14"><path d="M214,438.500 V449.500 M291.500,438.500 V449.500" stroke="#2a2a2a" stroke-width="1"/><path d="M215,438.500 V449.500 M292.500,438.500 V449.500" stroke="#686868" stroke-width="1"/>
<g fill="#9a9a9a"><rect x="771" y="442.500" width="1.200" height="1.200"/><rect x="771" y="445" width="1.200" height="1.200"/><rect x="768.500" y="445" width="1.200" height="1.200"/><rect x="771" y="447.500" width="1.200" height="1.200"/><rect x="768.500" y="447.500" width="1.200" height="1.200"/><rect x="766" y="447.500" width="1.200" height="1.200"/></g></svg>
<div class="a" id="bottom"></div>
<div class="t" style="left:18.6px;top:6.7px;font-size:9.2px;color:#fff;transform:scaleX(0.803);">Passport Photo Maker</div>
<div class="t" style="left:9.6px;top:22.0px;font-size:9.2px;color:#fff;transform:scaleX(0.769);">File</div>
<div class="t" style="left:29.5px;top:22.0px;font-size:9.2px;color:#fff;transform:scaleX(0.809);">View</div>
<div class="t" style="left:54.5px;top:22.0px;font-size:9.2px;color:#fff;transform:scaleX(0.809);">Settings</div>
<div class="t" style="left:90.3px;top:22.0px;font-size:9.2px;color:#fff;transform:scaleX(0.782);">Skin</div>
<div class="t" style="left:113.7px;top:22.0px;font-size:9.2px;color:#fff;transform:scaleX(0.809);">Help</div>
<div class="t" style="left:24.4px;top:43.7px;font-size:9.2px;color:#000;transform:scaleX(0.867);">Pictures</div>
<div class="t" style="left:36.3px;top:62.7px;font-size:9.2px;color:#000;transform:scaleX(0.879);">Pictures</div>
<div class="t" style="left:8.8px;top:110.3px;font-size:9.2px;color:#fff;transform:scaleX(0.880);">Sort by:</div>
<div class="t" style="left:72.5px;top:110.3px;font-size:9.2px;color:#2f8fd0;transform:scaleX(0.805);text-decoration:underline;">File name</div>
<div class="t" style="left:20.9px;top:171.0px;font-size:8.6px;color:#000;transform:scaleX(0.876);">portrait.jpg</div>
<div class="t" style="left:29.3px;top:394.0px;font-size:9.2px;color:#fff;transform:scaleX(0.862);">Open</div>
<div class="t" style="left:89.3px;top:394.0px;font-size:9.2px;color:#fff;transform:scaleX(0.885);">Actions</div>
<div class="t" style="left:45.7px;top:417.4px;font-size:9.2px;color:#fff;transform:scaleX(0.874);">Compare Photos</div>
<div class="t" style="left:218.5px;top:439.7px;font-size:9.2px;color:#fff;transform:scaleX(0.805);">Passport (2" x 2")</div>
<div class="t" style="left:296.0px;top:439.7px;font-size:9.2px;color:#fff;transform:scaleX(0.760);">Size: 2,00 x 2,00 "</div>
<div class="t" style="left:613.0px;top:38.7px;font-size:9.2px;color:#fff;transform:scaleX(0.751);">Free updates period has expired.</div>
<div class="t" style="left:577.4px;top:53.4px;font-size:9.2px;color:#fff;transform:scaleX(0.756);text-decoration:underline;">Renew your license at 50% OFF to receive new updates</div>
<div class="t" style="left:553.5px;top:78.2px;font-size:9.2px;color:#fff;transform:scaleX(0.872);">ID Type</div>
<div class="t" style="left:615.6px;top:76.7px;font-size:9.2px;color:#fff;transform:scaleX(0.873);">Crop</div>
<div class="t" style="left:673.5px;top:78.2px;font-size:9.2px;color:#fff;transform:scaleX(0.789);">Edit</div>
<div class="t" style="left:728.0px;top:78.2px;font-size:9.2px;color:#fff;transform:scaleX(0.899);">Print</div>
<div class="t" style="left:616.0px;top:103.5px;font-size:10.5px;color:#fff;transform:scaleX(0.949);font-weight:bold;">Crop Template</div>
<div class="t" style="left:585.7px;top:293.4px;font-size:9.2px;color:#fff;transform:scaleX(0.902);">Photo rotation:</div>
<div class="t" style="left:659.5px;top:293.4px;font-size:9.2px;color:#000;transform:scaleX(0.947);">-2,5°</div>
<div class="t" style="left:575.4px;top:316.1px;font-size:9.2px;color:#111;transform:scaleX(0.852);">Background was widened automatically</div>
<div class="t" style="left:723.0px;top:327.3px;font-size:9.2px;color:#1a6fc4;transform:scaleX(0.810);font-weight:bold;text-decoration:underline;">More...</div>
<div class="t" style="left:592.5px;top:373.7px;font-size:9.2px;color:#fff;transform:scaleX(0.880);">43%</div>
<div class="t" style="left:631.4px;top:373.7px;font-size:9.2px;color:#fff;transform:scaleX(0.930);">1,37" (69%)</div>
<div class="t" style="left:696.3px;top:373.7px;font-size:9.2px;color:#fff;transform:scaleX(0.931);">0,34"</div>
<div class="t" style="left:636.0px;top:409.8px;font-size:9.5px;color:#fff;transform:scaleX(0.923);font-weight:bold;">Next</div>
<div class="a" id="frameL"></div><div class="a" id="frameR"></div>
</body></html>
